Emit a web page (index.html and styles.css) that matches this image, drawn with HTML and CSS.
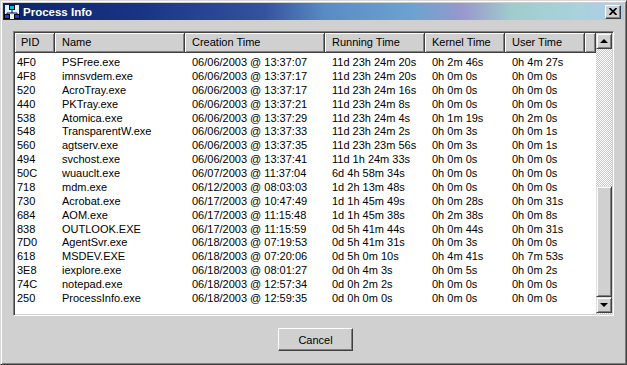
FILE: index.html
```html
<!DOCTYPE html>
<html lang="en">
<head>
    <meta charset="UTF-8" />
    <title>Process Info</title>
    <link rel="stylesheet" href="styles.css">
</head>
<body>

<div class="window">
    <!-- Title bar -->
    <div class="titlebar">
        <svg class="app-icon" width="16" height="16" viewBox="0 0 16 16">
            <rect x="1" y="1" width="14" height="14" fill="#e8f4f8"/>
            <rect x="5" y="1" width="6" height="5" fill="#000"/>
            <rect x="6" y="2" width="4" height="3" fill="#00c0e0"/>
            <path d="M8 6 V9 M3 9 H13 M3 9 V11 M13 9 V11" stroke="#000080" stroke-width="1" fill="none"/>
            <rect x="0" y="10" width="6" height="5" fill="#000"/>
            <rect x="1" y="11" width="4" height="3" fill="#2040c0"/>
            <rect x="10" y="10" width="6" height="5" fill="#000"/>
            <rect x="11" y="11" width="4" height="3" fill="#2040c0"/>
        </svg>
        <span class="title">Process Info</span>
        <div class="close-btn">
            <svg width="8" height="7" viewBox="0 0 8 7">
                <path d="M0.5 0 L7.5 7 M7.5 0 L0.5 7" stroke="#000" stroke-width="1.7"/>
            </svg>
        </div>
    </div>

    <div class="content">
        <!-- Process list -->
        <div class="listview">
            <div class="list-main">
                <div class="list-header">
                    <div class="hcell">PID</div>
                    <div class="hcell">Name</div>
                    <div class="hcell">Creation Time</div>
                    <div class="hcell">Running Time</div>
                    <div class="hcell">Kernel Time</div>
                    <div class="hcell">User Time</div>
                    <div class="hcell"></div>
                </div>
                <div class="rows">
                    <div class="row"><span>4F0</span><span>PSFree.exe</span><span>06/06/2003 @ 13:37:07</span><span>11d 23h 24m 20s</span><span>0h 2m 46s</span><span>0h 4m 27s</span></div>
                    <div class="row"><span>4F8</span><span>imnsvdem.exe</span><span>06/06/2003 @ 13:37:17</span><span>11d 23h 24m 20s</span><span>0h 0m 0s</span><span>0h 0m 0s</span></div>
                    <div class="row"><span>520</span><span>AcroTray.exe</span><span>06/06/2003 @ 13:37:17</span><span>11d 23h 24m 16s</span><span>0h 0m 0s</span><span>0h 0m 0s</span></div>
                    <div class="row"><span>440</span><span>PKTray.exe</span><span>06/06/2003 @ 13:37:21</span><span>11d 23h 24m 8s</span><span>0h 0m 0s</span><span>0h 0m 0s</span></div>
                    <div class="row"><span>538</span><span>Atomica.exe</span><span>06/06/2003 @ 13:37:29</span><span>11d 23h 24m 4s</span><span>0h 1m 19s</span><span>0h 2m 0s</span></div>
                    <div class="row"><span>548</span><span>TransparentW.exe</span><span>06/06/2003 @ 13:37:33</span><span>11d 23h 24m 2s</span><span>0h 0m 3s</span><span>0h 0m 1s</span></div>
                    <div class="row"><span>560</span><span>agtserv.exe</span><span>06/06/2003 @ 13:37:35</span><span>11d 23h 23m 56s</span><span>0h 0m 3s</span><span>0h 0m 1s</span></div>
                    <div class="row"><span>494</span><span>svchost.exe</span><span>06/06/2003 @ 13:37:41</span><span>11d 1h 24m 33s</span><span>0h 0m 0s</span><span>0h 0m 0s</span></div>
                    <div class="row"><span>50C</span><span>wuauclt.exe</span><span>06/07/2003 @ 11:37:04</span><span>6d 4h 58m 34s</span><span>0h 0m 0s</span><span>0h 0m 0s</span></div>
                    <div class="row"><span>718</span><span>mdm.exe</span><span>06/12/2003 @ 08:03:03</span><span>1d 2h 13m 48s</span><span>0h 0m 0s</span><span>0h 0m 0s</span></div>
                    <div class="row"><span>730</span><span>Acrobat.exe</span><span>06/17/2003 @ 10:47:49</span><span>1d 1h 45m 49s</span><span>0h 0m 28s</span><span>0h 0m 31s</span></div>
                    <div class="row"><span>684</span><span>AOM.exe</span><span>06/17/2003 @ 11:15:48</span><span>1d 1h 45m 38s</span><span>0h 2m 38s</span><span>0h 0m 8s</span></div>
                    <div class="row"><span>838</span><span>OUTLOOK.EXE</span><span>06/17/2003 @ 11:15:59</span><span>0d 5h 41m 44s</span><span>0h 0m 44s</span><span>0h 0m 31s</span></div>
                    <div class="row"><span>7D0</span><span>AgentSvr.exe</span><span>06/18/2003 @ 07:19:53</span><span>0d 5h 41m 31s</span><span>0h 0m 3s</span><span>0h 0m 0s</span></div>
                    <div class="row"><span>618</span><span>MSDEV.EXE</span><span>06/18/2003 @ 07:20:06</span><span>0d 5h 0m 10s</span><span>0h 4m 41s</span><span>0h 7m 53s</span></div>
                    <div class="row"><span>3E8</span><span>iexplore.exe</span><span>06/18/2003 @ 08:01:27</span><span>0d 0h 4m 3s</span><span>0h 0m 5s</span><span>0h 0m 2s</span></div>
                    <div class="row"><span>74C</span><span>notepad.exe</span><span>06/18/2003 @ 12:57:34</span><span>0d 0h 2m 2s</span><span>0h 0m 0s</span><span>0h 0m 0s</span></div>
                    <div class="row"><span>250</span><span>ProcessInfo.exe</span><span>06/18/2003 @ 12:59:35</span><span>0d 0h 0m 0s</span><span>0h 0m 0s</span><span>0h 0m 0s</span></div>
                </div>
            </div>

            <!-- Vertical scrollbar -->
            <div class="scrollbar">
                <div class="sb-btn raised"><span class="arrow-up"></span></div>
                <div class="sb-track"></div>
                <div class="sb-thumb raised"></div>
                <div class="sb-btn sb-down raised"><span class="arrow-down"></span></div>
            </div>
        </div>

        <div class="footer">
            <button class="btn">Cancel</button>
        </div>
    </div>
</div>

</body>
</html>
```

FILE: styles.css
```css
/* Classic dialog look */
html, body {
    margin: 0;
    padding: 0;
}

body {
    font-family: "Liberation Sans", Arial, sans-serif;
    font-size: 11px;
    color: #000;
    background-color: #d0d0d0;
}

.window {
    width: 627px;
    height: 365px;
    box-sizing: border-box;
    background-color: #d0d0d0;
    border: 1px solid;
    border-color: #d8d8d8 #404040 #404040 #d8d8d8;
    box-shadow: inset 1px 1px #fff, inset -1px -1px #808080;
    padding: 2px;
    display: flex;
    flex-direction: column;
}

/* Title bar */
.titlebar {
    height: 17px;
    display: flex;
    align-items: center;
    padding: 0 3px 0 1px;
    background: linear-gradient(to right, #0a246a 0%, #1a3484 22%, #34529e 42%, #5a8cc4 52%, #6ca2d2 66%, #9898cc 74%, #a0cccc 82%, #a8d2dc 92%, #b0cce8 100%);
}

.app-icon {
    flex-shrink: 0;
}

.title {
    margin-left: 3px;
    color: #fff;
    font-weight: bold;
    font-size: 11.5px;
}

.close-btn {
    margin-left: auto;
    width: 16px;
    height: 14px;
    box-sizing: border-box;
    background-color: #d0d0d0;
    border: 1px solid;
    border-color: #fff #404040 #404040 #fff;
    box-shadow: inset -1px -1px #808080;
    display: flex;
    align-items: center;
    justify-content: center;
}

/* Body */
.content {
    flex: 1;
    padding: 11px 10px 0 10px;
    display: flex;
    flex-direction: column;
}

.listview {
    height: 285px;
    box-sizing: border-box;
    background-color: #fff;
    border: 1px solid;
    border-color: #808080 #fff #fff #808080;
    box-shadow: inset 1px 1px #404040, inset -1px -1px #d0d0d0;
    padding: 1px;
    display: flex;
}

.list-main {
    flex: 1;
    display: flex;
    flex-direction: column;
    overflow: hidden;
}

.list-header {
    display: grid;
    grid-template-columns: 40px 130px 140px 100px 80px 80px 1fr;
    height: 20px;
}

.hcell {
    background-color: #d0d0d0;
    box-sizing: border-box;
    border-right: 1px solid #404040;
    border-bottom: 1px solid #404040;
    box-shadow: inset 1px 1px #fff, inset -1px -1px #808080;
    padding-left: 7px;
    line-height: 19px;
    white-space: nowrap;
}

.hcell:first-child {
    padding-left: 6px;
}

.rows {
    padding-top: 3px;
}

.row {
    display: grid;
    grid-template-columns: 40px 130px 140px 100px 80px 80px;
    height: 13.88px;
    line-height: 13.88px;
    white-space: nowrap;
}

.row span {
    padding-left: 7px;
}

.row span:first-child {
    padding-left: 2px;
}

/* Scrollbar */
.scrollbar {
    width: 16px;
    display: flex;
    flex-direction: column;
    background: repeating-conic-gradient(#fff 0 25%, #c8c8c8 0 50%) 0 0 / 2px 2px;
}

.raised {
    box-sizing: border-box;
    background-color: #d0d0d0;
    border: 1px solid;
    border-color: #e0e0e0 #404040 #404040 #e0e0e0;
    box-shadow: inset 1px 1px #fff, inset -1px -1px #808080;
}

.sb-btn {
    height: 16px;
    display: flex;
    align-items: center;
    justify-content: center;
}

.sb-track {
    height: 137px;
}

.sb-thumb {
    height: 111px;
}

.sb-down {
    margin-top: auto;
    margin-bottom: 1px;
}

.arrow-up,
.arrow-down {
    width: 0;
    height: 0;
    border-left: 4px solid transparent;
    border-right: 4px solid transparent;
}

.arrow-up {
    border-bottom: 4px solid #000;
}

.arrow-down {
    border-top: 4px solid #000;
}

/* Footer button */
.footer {
    display: flex;
    justify-content: center;
    padding-left: 4px;
    margin-top: 12px;
}

.btn {
    width: 75px;
    height: 23px;
    box-sizing: border-box;
    font-family: "Liberation Sans", Arial, sans-serif;
    font-size: 11px;
    color: #000;
    background-color: #d0d0d0;
    border: 1px solid;
    border-color: #fff #404040 #404040 #fff;
    box-shadow: inset -1px -1px #808080;
    padding: 0;
}
```
